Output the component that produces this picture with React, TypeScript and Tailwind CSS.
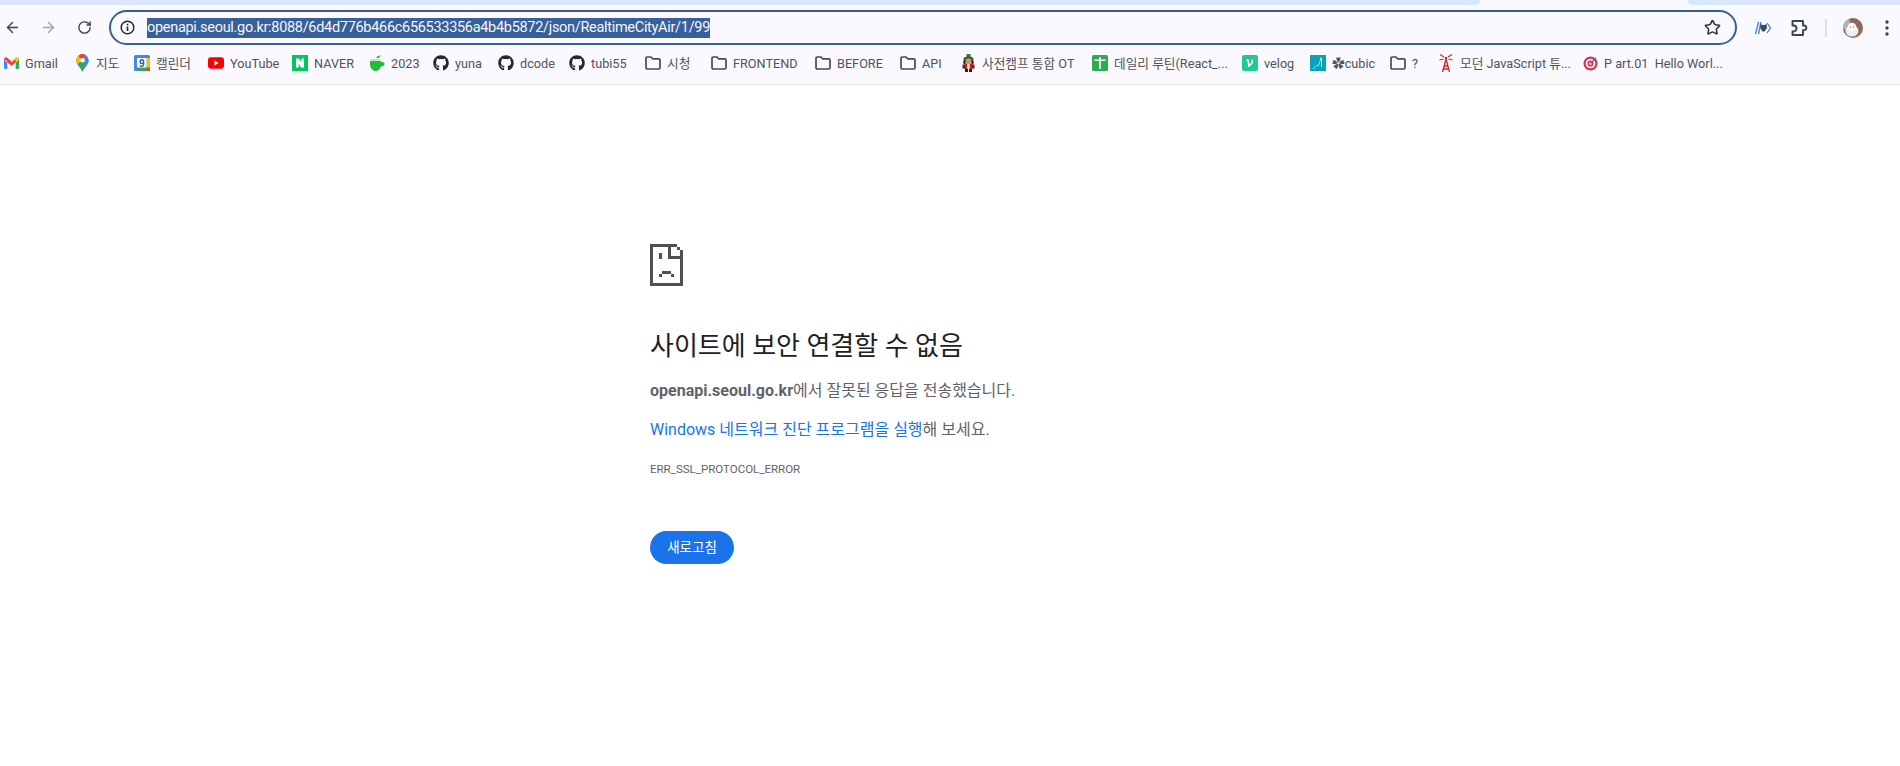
import React from "react";
import { ArrowLeft, ArrowRight, RotateCw, Star } from "lucide-react";
import { FaGithub } from "react-icons/fa";

const Folder = () => (
  <svg width="16" height="14" viewBox="0 0 16 14" fill="none">
    <path d="M1 2.200C1 1.500 1.500 1 2.200 1H6l1.600 1.800h6.200c.7 0 1.200.5 1.200 1.200v7.800c0 .7-.5 1.200-1.200 1.200H2.200C1.500 13 1 12.500 1 11.800z" stroke="#474a4f" strokeWidth="1.700" strokeLinejoin="round" />
  </svg>
);
const Gmail = () => (
  <svg width="15" height="12" viewBox="0 0 15 12">
    <path d="M0 2v9c0 .5.4 1 1 1h2.300V5.500z" fill="#4285f4" />
    <path d="M15 2v9c0 .5-.4 1-1 1h-2.300V5.500z" fill="#34a853" />
    <path d="M0 2c0-1.500 1.700-2.300 2.800-1.400L7.500 4.200v3L0 2z" fill="#ea4335" />
    <path d="M15 2c0-1.500-1.700-2.300-2.800-1.400L7.500 4.200v3L15 2z" fill="#fbbc04" />
    <path d="M3.300 2.400 7.500 5.600l4.200-3.200v3.100L7.500 8.700 3.300 5.500z" fill="#ea4335" />
  </svg>
);
const MapPin = () => (
  <svg width="13" height="18" viewBox="0 0 14 20">
    <path d="M7 20C5.800 16 0 12 0 7a7 7 0 0 1 3-5.700L7 7z" fill="#34a853" />
    <path d="M0 7c0 1.500.6 3 1.300 4L7 7 3 1.300C1.200 2.500 0 4.600 0 7z" fill="#fbbc04" />
    <path d="M3 1.300A7 7 0 0 1 11 1.300L7 7 3.500 3.800z" fill="#ea4335" />
    <path d="M11 1.300A7 7 0 0 1 14 7c0 5-5.800 9-7 13-.5-2-1.700-3.700-3-5.500L7 7z" fill="#4285f4" />
    <path d="M7 7 3.500 11c1.300 2 2.900 4.500 3.500 9 .7-3.500 2.300-5.600 3.800-7.800L7 7z" fill="#34a853" />
    <circle cx="7" cy="7" r="2.500" fill="#fff" />
  </svg>
);
const Calendar = () => (
  <svg width="16" height="16" viewBox="0 0 16 16">
    <rect width="16" height="16" rx="1.500" fill="#4285f4" />
    <rect x="12.500" y="3" width="3.500" height="10" fill="#fbbc04" />
    <rect x="3" y="12.500" width="10" height="3.500" fill="#34a853" />
    <rect x="12.500" y="12.500" width="3.500" height="3.500" fill="#ea4335" />
    <rect x="3" y="3" width="9.500" height="9.500" fill="#fff" />
    <text x="7.700" y="11.500" fontSize="10" fontWeight="700" textAnchor="middle" fill="#1a56b0" fontFamily="Liberation Sans, sans-serif">9</text>
  </svg>
);
const YouTube = () => (
  <svg width="17" height="12" viewBox="0 0 17 12">
    <rect width="17" height="12" rx="3" fill="#f00" />
    <path d="M6.800 3.400 11.300 6l-4.500 2.600z" fill="#fff" />
  </svg>
);
const Naver = () => (
  <svg width="16" height="16" viewBox="0 0 16 16">
    <rect width="16" height="16" fill="#03c75a" />
    <path d="M4 3.500h3l2.200 3.700V3.500H12v9H9L6.800 8.800v3.700H4z" fill="#fff" />
  </svg>
);
const Cup = () => (
  <svg width="16" height="16" viewBox="0 0 16 16">
    <path d="M8 1.500c1-.9 2.500-1.200 3.500-1-.4 1.500-1.500 2.600-3.500 2.800C7.300 3.400 7.500 2 8 1.500z" fill="#28b53c" />
    <path d="M1 6h11v1h1.500a1.800 1.800 0 0 1 0 4.200H12C11.300 14 9 16 6.500 16S1.500 13.500 1 10z" fill="#1fbf3b" />
    <rect x="2" y="4.400" width="9" height="1" fill="#7edb8e" />
  </svg>
);
const Soldier = () => (
  <svg width="15" height="18" viewBox="0 0 15 18">
    <rect x="5.500" y="0" width="4" height="3" fill="#3b7a3a" />
    <ellipse cx="7.500" cy="5" rx="5" ry="2.500" fill="#35542f" />
    <circle cx="7.500" cy="7.500" r="3.300" fill="#c9966b" />
    <path d="M3 6c-1 2-1 3 0 4h1.500V6zM12 6c1 2 1 3 0 4h-1.500V6z" fill="#2b2018" />
    <rect x="3" y="10" width="9" height="5" rx="1" fill="#a52a25" />
    <rect x="1.500" y="10.500" width="2" height="4" fill="#5c1f1c" />
    <rect x="11.500" y="10.500" width="2" height="4" fill="#5c1f1c" />
    <rect x="6.200" y="10" width="2.600" height="5" fill="#e8d9c0" />
    <rect x="4" y="15" width="3" height="3" fill="#2b2018" />
    <rect x="8" y="15" width="3" height="3" fill="#2b2018" />
  </svg>
);
const Cross = () => (
  <svg width="16" height="16" viewBox="0 0 16 16">
    <rect width="16" height="16" rx="1.500" fill="#2faa52" />
    <path d="M7.200 2h1.600v2.500h4.700V6H8.800v8H7.200V6H2.500V4.500h4.700z" fill="#fff" />
  </svg>
);
const Velog = () => (
  <svg width="16" height="16" viewBox="0 0 16 16">
    <rect width="16" height="16" rx="2" fill="#20c997" />
    <path d="M4 5c1-.8 2.600-1 2.900.2l.7 4.300c1.400-1.300 2.300-2.500 2.200-3.500 0-.5-.3-.8-.6-1.200.8-.5 2 0 2.100 1.100.1 1.700-1.800 4.200-4.400 6.100H6.300L5.500 6.300c-.1-.7-.5-.8-1.200-.5z" fill="#fff" />
  </svg>
);
const Cubic = () => (
  <svg width="16" height="16" viewBox="0 0 16 16">
    <rect width="16" height="16" fill="#0aa5b5" />
    <path d="M3 14c1.500-1 2-2 3-3.500M7 10l1 1c1.500-2 2-5 3-8.500M11.500 3v9" stroke="#d8f5f7" strokeWidth=".8" fill="none" />
  </svg>
);
const Tower = () => (
  <svg width="14" height="18" viewBox="0 0 14 18" fill="none" stroke="#c9252b" strokeWidth="1.300">
    <path d="M7 5 3.500 18M7 5l3.500 13M5 12h4M4.500 15h5" />
    <circle cx="7" cy="4" r="1.300" fill="#c9252b" stroke="none" />
    <path d="M1 .5 5 3M13 .5 9 3M.5 6 4.500 5M13.500 6 9.500 5" strokeWidth="1.100" />
  </svg>
);
const Target = () => (
  <svg width="15" height="15" viewBox="0 0 15 15">
    <circle cx="7.500" cy="7.500" r="7" fill="#d8344a" />
    <circle cx="7.500" cy="7.500" r="4.800" fill="#fff" />
    <circle cx="7.500" cy="7.500" r="3.100" fill="#d8344a" />
    <circle cx="7.500" cy="7.500" r="1.200" fill="#fff" />
    <path d="M7.500 7.500 13 2" stroke="#3e6fb0" strokeWidth="1.200" />
  </svg>
);
const Git = () => <FaGithub size={16} color="#24292f" />;

const Mark = ({ w, icon, label }: { w: string; icon: React.ReactNode; label: string }) => (
  <div className={`flex shrink-0 items-center ${w}`}>
    <span className="flex w-[16px] shrink-0 items-center justify-center">{icon}</span>
    <span className="ml-[6px] whitespace-pre text-[12.7px] text-[#50535a]">{label}</span>
  </div>
);

const SadPage = () => (
  <svg width="33" height="42" viewBox="0 0 11 14" shapeRendering="crispEdges" fill="#505050" className="block">
    <path d="M0 0h9v1H1v12h9V3h1v11H0z" />
    <rect x="9" y="1" width="1" height="1" />
    <rect x="10" y="2" width="1" height="1" />
    <path d="M6 1h1v3h4v1H6z" />
    <rect x="3" y="3" width="1" height="2" />
    <rect x="4" y="9" width="3" height="1" />
    <rect x="3" y="10" width="1" height="1" />
    <rect x="7" y="10" width="1" height="1" />
  </svg>
);

export default function App() {
  return (
    <div className="flex h-[766px] w-[1900px] flex-col overflow-hidden bg-white font-['Roboto','Noto_Sans_CJK_KR',sans-serif]">
      <header className="h-[85px] shrink-0 border-b border-[#e3e4ea] bg-[#f9f9ff]">
        <div className="flex h-[5px] bg-[#f9f9ff]">
          <div className="w-[1480px] rounded-br-[8px] bg-[#d9e5f8]" />
          <div className="w-[208px]" />
          <div className="w-[212px] rounded-bl-[8px] bg-[#d9e5f8]" />
        </div>
        <div className="mt-[5px] flex h-[35px] items-center">
          <span className="flex w-[24px] justify-center"><ArrowLeft size={17} color="#3f4248" strokeWidth={2} /></span>
          <span className="ml-[12px] flex w-[24px] justify-center"><ArrowRight size={17} color="#a3a5aa" strokeWidth={2} /></span>
          <span className="ml-[12px] flex w-[24px] justify-center"><RotateCw size={15} color="#3f4248" strokeWidth={2.2} /></span>
          <div className="ml-[13px] flex h-[35px] w-[1628px] items-center rounded-full border-2 border-[#37609b] pl-[9px] pr-[14px]">
            <svg width="15" height="15" viewBox="0 0 15 15" fill="none" className="shrink-0">
              <circle cx="7.500" cy="7.500" r="6.300" stroke="#24272c" strokeWidth="1.500" />
              <rect x="6.700" y="6.500" width="1.600" height="4.500" fill="#24272c" />
              <rect x="6.700" y="3.800" width="1.600" height="1.600" fill="#24272c" />
            </svg>
            <span className="ml-[12px] flex h-[20px] items-center whitespace-nowrap bg-[#37609b] text-[14.5px] tracking-[-0.3px] text-[#f4f6fb]">openapi.seoul.go.kr:8088/6d4d776b466c656533356a4b4b5872/json/RealtimeCityAir/1/99</span>
            <Star size={17} color="#2f3338" strokeWidth={2.2} className="ml-auto" />
          </div>
          <svg width="18" height="14" viewBox="0 0 18 14" className="ml-[17px]" fill="none">
            <path d="M4.500 1 1.500 13M7 1 4.500 13" stroke="#3b80d0" strokeWidth="1.300" />
            <path d="M13 2l3.500 5-3.500 5" stroke="#3b80d0" strokeWidth="1.300" />
            <path d="M6.500 3l2 1 2-.1 2-.9.500 4-2.500 3.500h-2L6.200 7z" fill="#3d4a5c" />
          </svg>
          <svg width="18" height="18" viewBox="0 0 18 18" fill="none" className="ml-[18px]">
            <path d="M2.500 2H13V6.500H14A2.300 2.300 0 0 1 14 11.100H13V16H2.500V12.500H3.500A3 3 0 0 0 3.500 6.500H2.500Z" stroke="#3c4450" strokeWidth="1.900" strokeLinejoin="round" />
          </svg>
          <div className="ml-[17px] h-[18px] w-[1.500px] bg-[#d3e1f6]" />
          <svg width="20" height="20" viewBox="0 0 20 20" className="ml-[16px]">
            <circle cx="10" cy="10" r="10" fill="#8a6a58" />
            <path d="M0 10a10 10 0 0 1 6-9l2 6-2 8z" fill="#b9b2ab" />
            <ellipse cx="9" cy="13" rx="6.500" ry="5.500" fill="#eeeef0" />
            <circle cx="9" cy="9" r="4.300" fill="#f7f7f8" />
            <circle cx="7.500" cy="9" r=".6" fill="#555" />
            <circle cx="10.500" cy="9" r=".6" fill="#555" />
          </svg>
          <svg width="4" height="16" viewBox="0 0 4 16" fill="#3c4450" className="ml-[22px]">
            <circle cx="2" cy="2" r="1.700" />
            <circle cx="2" cy="8" r="1.700" />
            <circle cx="2" cy="14" r="1.700" />
          </svg>
        </div>
        <nav className="flex h-[37px] items-center pl-[3px]">
          <Mark w="w-[71px]" icon={<Gmail />} label="Gmail" />
          <Mark w="w-[60px]" icon={<MapPin />} label="지도" />
          <Mark w="w-[74px]" icon={<Calendar />} label="캘린더" />
          <Mark w="w-[84px]" icon={<YouTube />} label="YouTube" />
          <Mark w="w-[77px]" icon={<Naver />} label="NAVER" />
          <Mark w="w-[64px]" icon={<Cup />} label="2023" />
          <Mark w="w-[65px]" icon={<Git />} label="yuna" />
          <Mark w="w-[71px]" icon={<Git />} label="dcode" />
          <Mark w="w-[76px]" icon={<Git />} label="tubi55" />
          <Mark w="w-[66px]" icon={<Folder />} label="시청" />
          <Mark w="w-[104px]" icon={<Folder />} label="FRONTEND" />
          <Mark w="w-[85px]" icon={<Folder />} label="BEFORE" />
          <Mark w="w-[60px]" icon={<Folder />} label="API" />
          <Mark w="w-[132px]" icon={<Soldier />} label="사전캠프 통합 OT" />
          <Mark w="w-[150px]" icon={<Cross />} label="데일리 루틴(React_..." />
          <Mark w="w-[68px]" icon={<Velog />} label="velog" />
          <Mark w="w-[80px]" icon={<Cubic />} label="✿cubic" />
          <Mark w="w-[48px]" icon={<Folder />} label="?" />
          <Mark w="w-[144px]" icon={<Tower />} label="모던 JavaScript 튜..." />
          <Mark w="w-[140px]" icon={<Target />} label="P art.01  Hello Worl..." />
        </nav>
      </header>
      <main className="mx-auto w-[600px] pt-[159px]">
        <SadPage />
        <h1 className="mt-[42px] text-[26px] font-normal leading-[36px] text-[#202124]">사이트에 보안 연결할 수 없음</h1>
        <p className="mt-[15px] text-[16px] leading-[24px] text-[#5f6368]"><b className="font-bold">openapi.seoul.go.kr</b>에서 잘못된 응답을 전송했습니다.</p>
        <p className="mt-[15px] text-[16px] leading-[24px] text-[#5f6368]"><span className="text-[#1a73e8]">Windows 네트워크 진단 프로그램을 실행</span>해 보세요.</p>
        <p className="mt-[18px] text-[11.5px] leading-[18px] text-[#5f6368]">ERR_SSL_PROTOCOL_ERROR</p>
        <button className="mt-[53px] flex h-[33px] w-[84px] items-center justify-center rounded-full bg-[#1a73e8] text-[13.5px] text-white">새로고침</button>
      </main>
    </div>
  );
}
